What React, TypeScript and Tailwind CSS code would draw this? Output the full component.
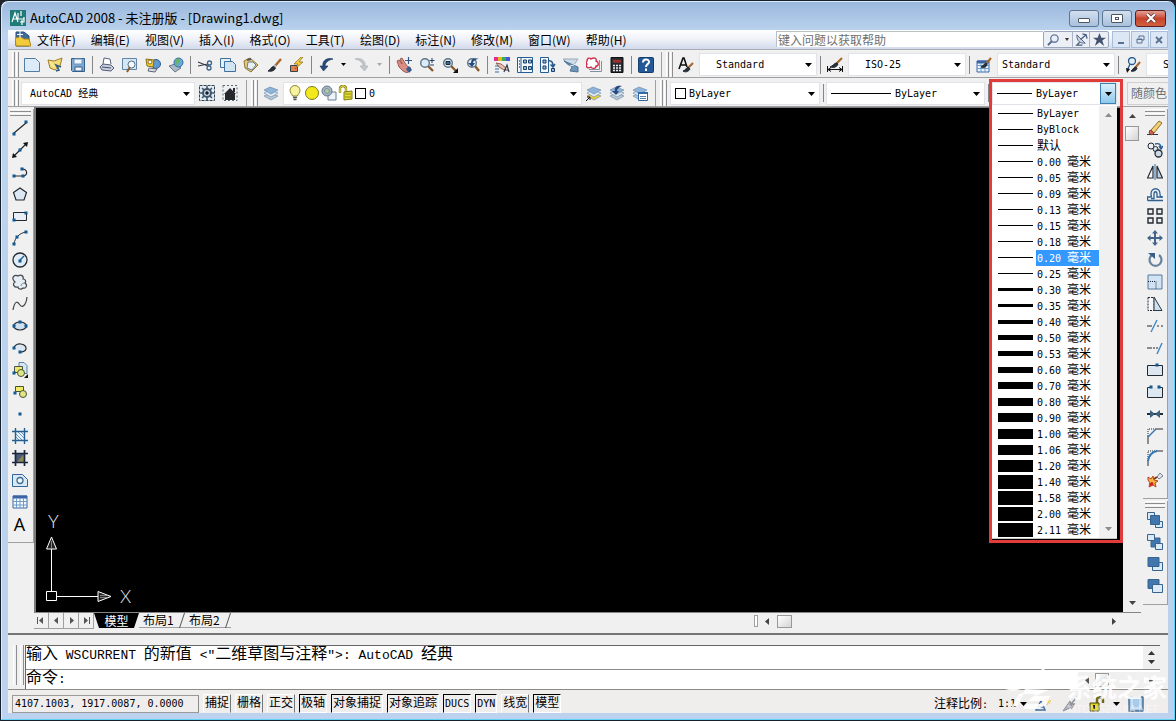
import { useState, type ReactNode } from 'react';
import clsx from 'clsx';

const mono = "font-[family-name:'DejaVu_Sans_Mono','Noto_Sans_CJK_SC',monospace] text-[10px]";

/* ---------- drawing helpers ---------- */

function Icon({ children, className }: { children: ReactNode; className?: string }) {
  return (
    <svg viewBox="0 0 16 16" className={clsx('size-4 shrink-0', className)} fill="none" stroke="#24292f" aria-hidden="true">
      {children}
    </svg>
  );
}

function Dot({ x, y }: { x: number; y: number }) {
  return <rect x={x - 1} y={y - 1} width="2" height="2" fill="#2b86c5" stroke="#0d4f86" />;
}

function Layers({ top = '#8fb4d9', bottom = '#b9c6d4' }: { top?: string; bottom?: string }) {
  return (
    <g stroke="#6484a5" strokeWidth=".6">
      <path d="M1 11l6-3 8 3-7 4z" fill={bottom} />
      <path d="M1 8l6-3 8 3-7 4z" fill="#dfe9f3" />
      <path d="M1 5l6-3 8 3-7 4z" fill={top} />
    </g>
  );
}

function Lens({ x = 6, y = 6 }: { x?: number; y?: number }) {
  return (
    <>
      <path d={`M${x + 3} ${y + 3}L14 14`} stroke="#8a5a2a" strokeWidth="2.4" />
      <circle cx={x} cy={y} r="4.3" fill="#dcecf9" stroke="#5f7487" strokeWidth="1.4" />
    </>
  );
}

function Brush() {
  return (
    <>
      <path d="M15 2L9 9" stroke="#a8672c" strokeWidth="2.4" />
      <path d="M9.500 8L7 10.500" stroke="#b8c2cc" strokeWidth="2.400" />
      <path d="M8 9.500c-3 0-3 3-6 4.500 4 1 7-1 7.500-3z" fill="#26303a" />
    </>
  );
}

/* ---------- icon sets ---------- */

const standardIcons: Record<string, ReactNode> = {
  新建: <path d="M.500 1.500h11l4 4v9H.500z" fill="#dcebf7" stroke="#4f7fa9" />,
  打开: (
    <>
      <path d="M1 3l6 1 8-3-2 8-5 4-5-2z" fill="#f4dc77" stroke="#9b7f2a" />
      <path d="M9 14l3-1-3-5 5 2" stroke="#2f5d85" strokeWidth="1.500" />
      <path d="M3 5l4 5" stroke="#fff6c2" />
    </>
  ),
  保存: (
    <>
      <path d="M1.500 1.500h13v13h-12l-1-1z" fill="#7fa9d0" stroke="#345f8c" />
      <path d="M4 2h8v5H4z" fill="#eef5fb" stroke="#6c93b8" />
      <path d="M5 10h7v4H5z" fill="#f4f7fa" stroke="#345f8c" />
    </>
  ),
  打印: (
    <>
      <path d="M4 7l1-6 6 1 1 5" fill="#fff" stroke="#5b6280" />
      <path d="M1 10l3-3 8 1 3 3-3 3-9-1z" fill="#c9cfdf" stroke="#555c78" />
      <path d="M3 10l9 1" stroke="#464d69" />
    </>
  ),
  打印预览: (
    <>
      <path d="M.500 1.500h14v11H.500z" fill="#d5e7f5" stroke="#5f86a8" />
      <circle cx="9.500" cy="7.500" r="3.500" fill="#f4faff" stroke="#5a6d7c" />
      <path d="M8 10l-3 5" stroke="#8a5a2a" strokeWidth="2" />
    </>
  ),
  发布: (
    <>
      <circle cx="11" cy="7" r="4.500" fill="#5e9ad0" stroke="#2c5e8f" />
      <path d="M1 2l8 1-1 7-6-1z" fill="#f3cf3e" stroke="#8c6d13" />
      <circle cx="5" cy="5" r="2" fill="#fff" stroke="#8c6d13" />
      <path d="M4 11l8 1-2 3-7-1z" fill="#d8dde5" stroke="#5d6775" />
    </>
  ),
  网上发布: (
    <>
      <path d="M1 9l6-2 6 4-6 4z" fill="#aab9c8" stroke="#6b7987" />
      <circle cx="10.500" cy="5.500" r="4.500" fill="#68a8dc" stroke="#376b99" />
      <path d="M8 2c3-1 5 1 4 3s-3 0-3 4c-2-2-3-5-1-7z" fill="#68b36b" stroke="none" />
    </>
  ),
  剪切: (
    <>
      <path d="M1 5l10 4M1 9l10-2" stroke="#343b44" strokeWidth="1.200" />
      <circle cx="12.500" cy="6" r="2" stroke="#3c638a" strokeWidth="1.300" />
      <circle cx="12" cy="11" r="2" stroke="#3c638a" strokeWidth="1.300" />
    </>
  ),
  复制: (
    <>
      <path d="M.500 1.500h10v9H.500z" fill="#e5f0f9" stroke="#3f719c" />
      <path d="M4.500 4.500h8l3 3v7h-11z" fill="#d1e4f3" stroke="#3f719c" />
    </>
  ),
  粘贴: (
    <>
      <path d="M1 4l6-3 8 7-7 7-6-4z" fill="#e5c979" stroke="#927434" />
      <path d="M5 5h5l3 3-4 5-5-2z" fill="#e8f0f7" stroke="#687e91" />
      <path d="M4 3l4-1" stroke="#555" strokeWidth="2" />
    </>
  ),
  特性匹配: <Brush />,
  块编辑器: (
    <>
      <path d="M1.500 8.500h7v6h-7z" fill="#e37e50" stroke="#3a4048" />
      <path d="M12 0L5 7h4l-3 5 8-7h-4l4-5z" fill="#f7d13b" stroke="#87651a" strokeWidth=".7" />
    </>
  ),
  放弃: <path d="M15 2C9 0 4 4 5 9H2l3.500 5L10 9H7c0-3 3-6 8-7z" fill="#27497b" stroke="#1d3a63" strokeWidth=".7" />,
  重做: <path d="M1 2c6-2 11 2 10 7h3l-3.500 5L6 9h3c0-3-3-6-8-7z" fill="#c3c6ca" stroke="#aeb2b7" strokeWidth=".7" />,
  实时平移: (
    <>
      <path d="M1 4l2-1 3 4-2-5 2-1 3 5 3 4 3 1-4 5-4-2-4-4z" fill="#d98d83" stroke="#8f4540" strokeWidth=".8" />
      <path d="M10 12l3-3 3 4-3 3z" fill="#325c92" stroke="none" />
      <path d="M12.500 0v7M9 3.500h7" stroke="#36557d" strokeWidth="1.200" />
    </>
  ),
  实时缩放: (
    <>
      <Lens />
      <path d="M13 1v5M10.500 3.500h5M11 8h4" stroke="#28415e" />
    </>
  ),
  窗口缩放: (
    <>
      <Lens />
      <path d="M4 4.500h4v3H4z" fill="#356f9f" />
      <path d="M16 11v5h-5z" fill="#111" stroke="none" />
    </>
  ),
  缩放上一个: (
    <>
      <Lens x={7} y={6} />
      <path d="M14 2C9 0 6 2 6 6H3l4 4 3-4H8c0-2 3-4 6-4z" fill="#27497b" stroke="none" />
    </>
  ),
  特性: (
    <>
      <path d="M0 2h4" stroke="#e12d8f" strokeWidth="4" />
      <path d="M4 2h4" stroke="#e8b81f" strokeWidth="4" />
      <path d="M8 2h4" stroke="#37ad58" strokeWidth="4" />
      <path d="M12 2h4" stroke="#4b55d6" strokeWidth="4" />
      <path d="M2 6l5 1 5 4-2 2-5-3z" fill="#eac1ae" stroke="#9c5b50" />
      <path d="M1 9h4M1 12h4M1 15h4" stroke="#3c6a97" />
      <path d="M10 15l3-7 2 7M11 13h4" stroke="#333b48" strokeWidth="1.200" />
    </>
  ),
  设计中心: (
    <>
      <path d="M.5.500h15v15H.500z" fill="#f2f8fd" stroke="#245c93" />
      <path d="M4 1v14" stroke="#245c93" />
      <path d="M2 4h1M2 7h1M2 10h1" stroke="#245c93" strokeWidth="1.500" />
      <path d="M6.500 3h3v3h-3zM11.500 3h3v3h-3zM6.500 9.500h3v3h-3zM11.500 9.500h3v3h-3z" fill="#90b9dc" stroke="#1c3f63" />
    </>
  ),
  工具选项板: (
    <>
      <path d="M.5.500h8v15h-8z" fill="#f2f8fd" stroke="#245c93" />
      <path d="M3 3h3v3H3zM3 9h3v3H3z" fill="#90b9dc" stroke="#1c3f63" />
      <path d="M8 4c4-1 5 2 5 5M10.500 7.500L13 10l2-3" stroke="#27588d" strokeWidth="1.500" />
      <path d="M11.500 11.500h3v3h-3z" fill="#90b9dc" stroke="#1c3f63" />
    </>
  ),
  图纸集管理器: (
    <>
      <path d="M0 2h15l-4 6H5z" fill="#cddbe7" stroke="#94a9bb" />
      <path d="M1 4l14 6v5l-8-1 2-4z" fill="#6f97b9" stroke="#4b7394" />
      <path d="M7 9l7-2" stroke="#e9f1f7" />
    </>
  ),
  标记集管理器: (
    <>
      <path d="M4 14.500h11.500V4M3 12.500h10.500V3" stroke="#8490a0" />
      <path d="M1 4c0-4 4-3 4-2 3-2 6-1 5 2 3 1 3 5 0 5 0 3-4 3-5 1-3 2-6 0-4-3-1-1-1-2 0-3z" fill="#fff" stroke="#d72f4b" strokeWidth="1.400" />
    </>
  ),
  快速计算器: (
    <>
      <path d="M2 .500h12v15H2z" fill="#252b31" stroke="#111" />
      <path d="M4 3h8v2.500H4z" fill="#a43030" stroke="#843030" strokeWidth=".5" />
      <path d="M4 8.500h2M7 8.500h2M10 8.500h2M4 11h2M7 11h2M10 11h2M4 13.500h2M7 13.500h2M10 13.500h2" stroke="#eee" strokeWidth="1.400" />
    </>
  ),
  帮助: (
    <>
      <rect x=".5" y=".5" width="15" height="15" rx="1" fill="#235996" stroke="#163e6c" />
      <path d="M5 5.500c0-4 6-4 6-.5 0 2.300-3 2-3 5M8 11.500V14" stroke="#fff" strokeWidth="2" />
    </>
  ),
};

const drawIcons: Record<string, ReactNode> = {
  直线: (<><path d="M2 13L14 3" strokeWidth="1.200" /><Dot x={2} y={14} /><Dot x={14} y={2} /></>),
  构造线: (<><path d="M2 14L14 2" strokeWidth="1.300" /><path d="M0 16l1-5 4 4zM16 0l-1 5-4-4z" fill="#111" stroke="none" /><Dot x={8} y={8} /></>),
  多段线: (<><path d="M2 12h9M10 5c6 0 6 7 1 7" strokeWidth="1.200" /><Dot x={2} y={12} /><Dot x={10} y={5} /><Dot x={11} y={12} /></>),
  正多边形: <path d="M8 2l6.500 4.500L12 14H4L1.500 6.500z" fill="#dce8f3" strokeWidth="1.200" />,
  矩形: (<><path d="M1.500 4.500h13v8h-13z" fill="#e8edf6" /><Dot x={2} y={12} /><Dot x={14} y={5} /></>),
  圆弧: (<><path d="M2 14C3 7 8 3 14 2" /><Dot x={2} y={14} /><Dot x={5} y={7} /><Dot x={14} y={2} /></>),
  圆: (<><circle cx="8" cy="8" r="7" fill="#e1ecf6" strokeWidth="1.300" /><path d="M8 8l4-4" stroke="#216399" strokeWidth="1.500" /><Dot x={8} y={9} /></>),
  修订云线: (
    <>
      <path d="M2 7C-1 3 3 0 6 2c3-2 6 0 5 3 3 0 3 3 2 4 3 2 1 6-2 5-2 2-5 1-5-1-4 1-6-3-3-5z" fill="#e5edf5" stroke="#41464c" strokeWidth="1.200" />
      <path d="M9 12c0-2 2-3 4-3" stroke="#7b858e" />
    </>
  ),
  样条曲线: <path d="M1 14C3 3 6 6 8 9s6 1 7-8" stroke="#444" strokeWidth="1.200" />,
  椭圆: (<><ellipse cx="8" cy="8" rx="6.500" ry="4" fill="#cfe1f1" strokeWidth="1.200" /><Dot x={2} y={8} /><Dot x={8} y={4} /><Dot x={14} y={8} /></>),
  椭圆弧: (<><path d="M2 8c1-6 13-5 12 1-1 3-4 3-6 3" fill="#dbe8f4" strokeWidth="1.200" /><Dot x={2} y={8} /><Dot x={8} y={12} /></>),
  插入块: (
    <>
      <path d="M7 .500h5l3 3v8H7z" fill="#d6e6f4" stroke="#5a84aa" />
      <path d="M2.500 4.500h8v6h-8z" fill="#ece96a" stroke="#4b5344" />
      <circle cx="9" cy="11" r="3.500" fill="#dfe682" stroke="#49543c" />
      <Dot x={2} y={11} />
      <path d="M16 12v4h-4z" fill="#111" stroke="none" />
    </>
  ),
  创建块: (<><path d="M3.500 2.500h8v5h-8z" fill="#f1ec68" stroke="#49532f" /><circle cx="11" cy="10" r="3.500" fill="#dfe682" stroke="#49543c" /><Dot x={3} y={9} /></>),
  点: <Dot x={8} y={8} />,
  图案填充: (
    <>
      <path d="M3 3h10v10H3z" fill="#edf5fb" stroke="none" />
      <path d="M3 8l5 5M3 5l8 8M5 3l8 8M8 3l5 5" stroke="#3d7fae" strokeWidth=".8" />
      <path d="M3.500 0v16M12.500 0v16M0 3.500h16M0 12.500h16" stroke="#245f94" strokeWidth="1.400" />
    </>
  ),
  渐变色: (
    <>
      <path d="M3 3h10v10H3z" fill="#4c5b76" stroke="none" />
      <path d="M12 4v8H5z" fill="#8b8b52" stroke="none" />
      <path d="M3.500 0v16M12.500 0v16M0 3.500h16M0 12.500h16" stroke="#1b2640" strokeWidth="1.700" />
    </>
  ),
  面域: (<><path d="M.5 2.500h10l5 5v7H.500z" fill="#d9e8f5" stroke="#32669a" /><circle cx="8" cy="8.500" r="3" fill="#eff6fb" stroke="#416c92" strokeWidth="1.300" /></>),
  表格: (
    <>
      <path d="M1 2h14v12H1z" fill="#f3f8fd" stroke="#3b68a8" />
      <path d="M1 3h14" stroke="#3a64a5" strokeWidth="3" />
      <path d="M1 7.500h14M1 11h14M4.500 4v10M8 4v10M11.500 4v10" stroke="#719bc8" />
    </>
  ),
};

const modifyIcons: Record<string, ReactNode> = {
  删除: (<><path d="M0 14.500h11" stroke="#333" /><path d="M4 10l8-9 3 2-8 10z" fill="#f0cf74" stroke="#8f6e31" /><path d="M3 10l4 3-2 2-3-2z" fill="#d7655a" stroke="#823e35" /></>),
  复制对象: (<><circle cx="4" cy="4" r="3" fill="#eaf1f7" /><circle cx="8.500" cy="7" r="2.500" fill="#d7e6f2" /><circle cx="11.500" cy="11.500" r="3.500" fill="#ccdae5" strokeWidth="1.300" /><path d="M8 2c4-1 6 0 6 4M12 4l2 3 2-3" stroke="#285f94" strokeWidth="1.400" /></>),
  镜像: (<><path d="M6 2v12H.500z" fill="#f6f8fa" strokeWidth="1.200" /><path d="M10 2v12h5.500z" fill="#bfd2e4" strokeWidth="1.200" /><path d="M8 0v16" stroke="#2a70ad" /></>),
  偏移: (
    <>
      <path d="M.500 14.500V11H4c1-1 0-1 0-3 0-7 9-7 9 0 0 2 0 2 1 3h2" fill="#eaf2f8" stroke="#2e5f8d" strokeWidth="1.300" />
      <path d="M.500 14.500H16M4 12.500h3V8c0-3 3-3 3 0v3h5" stroke="#2e5f8d" strokeWidth="1.300" />
    </>
  ),
  阵列: <path d="M1 1h5v5H1zM10 1h5v5h-5zM1 10h5v5H1zM10 10h5v5h-5z" fill="#e7edf3" strokeWidth="1.400" />,
  移动: <path d="M8 0l3 3.500H9V7h3.500V5L16 8l-3.500 3V9H9v3.500h2L8 16l-3-3.500h2V9H3.500v2L0 8l3.500-3v2H7V3.500H5z" fill="#41658b" stroke="none" />,
  旋转: (<><path d="M5 3a6 6 0 1 0 7 0" stroke="#66839e" strokeWidth="2.200" /><path d="M1 1h7v6z" fill="#365f87" stroke="none" /></>),
  缩放: (<><path d="M1 1h14v14H1z" fill="#d1e3f2" stroke="#54799c" /><path d="M1 7.500h8V15" stroke="#16283b" strokeDasharray="1 1" /></>),
  拉伸: (<><path d="M1 1.500h6v13H1z" fill="#f5f7fa" strokeDasharray="2 1" /><path d="M7 1l8 13.500H7z" fill="#cfdfee" stroke="#2c3947" /></>),
  修剪: (<><path d="M0 8h5M10 8h2M14 8h2" /><path d="M4 14l6-12" stroke="#3f85c1" strokeWidth="1.400" /></>),
  延伸: (<><path d="M0 8h5M6 8h2M9 8h2" /><path d="M10 14l5-11" stroke="#3f85c1" strokeWidth="1.400" /></>),
  打断于点: (<><path d="M.500 3.500h15v10H.500z" fill="#dce7f1" /><Dot x={10} y={3} /></>),
  打断: (<><path d="M5 3.500H.500v10h15v-10H11" fill="#dce7f1" /><Dot x={4} y={3} /><Dot x={12} y={3} /></>),
  合并: (<><path d="M0 8h16" strokeWidth="2" /><path d="M3 4l5 4-5 4zM13 4L8 8l5 4z" fill="#3b5f80" stroke="none" /></>),
  倒角: (<><path d="M1 16V8M9 1h7" /><path d="M1 8V1h8" strokeDasharray="1 1" /><path d="M1 9l8-8" stroke="#3679b5" strokeWidth="1.500" /></>),
  圆角: (<><path d="M1 16v-5M10 1h6" /><path d="M1 11V1h9" strokeDasharray="1 1" /><path d="M1 11C2 5 5 2 10 1" stroke="#3278b8" strokeWidth="2" /></>),
  分解: (
    <>
      <path d="M1 5l3 2 2-3 1 4 4 1-3 2 1 4-3-2-4 2 1-4-2-3z" fill="#f2b83c" stroke="#bc3e2b" />
      <path d="M10 5l3-4 3 3-4 3z" fill="#dfe5ea" stroke="#75818b" />
      <path d="M3 13l3-2" stroke="#d42020" strokeWidth="3" />
      <path d="M7 7l3-2" stroke="#7a3b1c" strokeWidth="2" />
    </>
  ),
};

const back = '#dceaf6';
const front = '#4177ad';
const orderIcons: Record<string, ReactNode> = {
  前置: (<g stroke="#36648f"><path d="M.500.500h7v7h-7zM8.500 9.500h7v6h-7z" fill={back} /><path d="M3.500 3.500h9v9h-9z" fill={front} /></g>),
  后置: (<g stroke="#36648f"><path d="M4 4h9v9H4z" fill={front} /><path d="M.500.500h7v6h-7zM8.500 9.500h7v6h-7z" fill={back} /></g>),
  置于对象之上: (<g stroke="#36648f"><path d="M5.500 6.500h10v8h-10z" fill={back} /><path d="M1 1.500h11v9H1z" fill={front} /></g>),
  置于对象之下: (<g stroke="#36648f"><path d="M1 1.500h11v9H1z" fill={front} /><path d="M5.500 6.500h10v8h-10z" fill={back} /></g>),
};

/* ---------- small building blocks ---------- */

function ToolButton({ label, children }: { label: string; children: ReactNode }) {
  return (
    <button type="button" aria-label={label} className="flex h-[22px] w-[23px] shrink-0 items-center justify-center">
      <Icon>{children}</Icon>
    </button>
  );
}

function IconGroup({ names }: { names: string[] }) {
  return (
    <>
      {names.map((name) => (
        <ToolButton key={name} label={name}>{standardIcons[name]}</ToolButton>
      ))}
    </>
  );
}

function Grip() {
  return (
    <span className="ml-1 flex w-2 shrink-0 gap-px self-stretch">
      <span className="w-[3px] border-r border-l border-r-[#8d8d8d] border-l-white" />
      <span className="w-[3px] border-r border-l border-r-[#8d8d8d] border-l-white" />
    </span>
  );
}

function SideGrip() {
  return (
    <div className="mx-0.5 mt-0.5 mb-px flex h-[7px] flex-col gap-px">
      <span className="h-[3px] border-t border-b border-t-white border-b-[#8d8d8d]" />
      <span className="h-[3px] border-t border-b border-t-white border-b-[#8d8d8d]" />
    </div>
  );
}

function Separator() {
  return (
    <span className="flex w-1.5 shrink-0 justify-center">
      <span className="h-[18px] w-px bg-[#858585]" />
    </span>
  );
}

function Arrow({ dir = 'down', className = 'text-black' }: { dir?: 'up' | 'down' | 'left' | 'right'; className?: string }) {
  const paths = { down: 'M0 2h7L3.500 6z', up: 'M0 5h7L3.500 1z', left: 'M5 0v7L1 3.500z', right: 'M2 0v7l4-3.500z' };
  return (
    <svg viewBox="0 0 7 7" className={clsx('size-[7px] shrink-0', className)} fill="currentColor" aria-hidden="true">
      <path d={paths[dir]} />
    </svg>
  );
}

interface ComboProps {
  label: string;
  value: string;
  width: string;
  pad?: string;
  lead?: ReactNode;
  open?: boolean;
}

function Combo({ label, value, width, pad = 'pl-1', lead, open = false }: ComboProps) {
  return (
    <div className={clsx('relative flex h-[23px] shrink-0 items-center border border-[#e0e3e8] bg-white', width)}>
      {lead}
      <select aria-label={label} className={clsx('h-full min-w-0 flex-1 appearance-none text-black outline-none', pad, mono)}>
        <option>{value}</option>
      </select>
      <span
        className={clsx(
          'pointer-events-none absolute top-0 right-0 flex h-full w-4 items-center justify-center',
          open && 'border border-[#3c7fb1] bg-gradient-to-b from-[#d9f0fc] to-[#8fc8ea]'
        )}
      >
        <Arrow />
      </span>
    </div>
  );
}

// Latin runs are set narrower than the Chinese ones, like a bitmap system font
function Mixed({ text }: { text: string }) {
  return (
    <>
      {text.split(/([\u4e00-\u9fff]+)/).map((part, i) => (
        <span key={i} className={i % 2 ? 'text-xs' : 'text-[10px]'}>{part}</span>
      ))}
    </>
  );
}

/* ---------- window chrome ---------- */

function TitleBar() {
  const caption = 'flex h-[17px] items-center justify-center rounded-[3px] border border-[#5e7590] bg-gradient-to-b from-[#d2e0ef] to-[#a9c1dc]';
  return (
    <header className="flex h-[29px] items-center pt-[5px]">
      <Icon className="ml-0.5">
        <path d="M0 0h16v16H0z" fill="#1e7b78" stroke="none" />
        <path d="M2 12L5 3l3 9M3 9h5M8 3v6h6M11 1v5M10 12h4V7M12 10v5" stroke="#fff" strokeWidth="1.200" />
      </Icon>
      <h1 className="ml-1 flex-1 text-[13px] leading-5 text-black">
        AutoCAD 2008 - 未注册版 - [Drawing1.dwg]
      </h1>
      <div className="flex gap-[3px] pr-0.5">
        <button type="button" aria-label="最小化" className={clsx(caption, 'w-[30px]')}>
          <span className="mt-1 h-[5px] w-3 rounded-[1px] border border-[#4c5663] bg-white" />
        </button>
        <button type="button" aria-label="还原" className={clsx(caption, 'w-[30px]')}>
          <span className="flex h-[9px] w-3 items-center justify-center rounded-[1px] border border-[#4c5663] bg-white">
            <span className="h-[3px] w-1 border border-[#4c5663]" />
          </span>
        </button>
        <button
          type="button"
          aria-label="关闭"
          className="flex h-[17px] w-[31px] items-center justify-center rounded-[3px] border border-[#5f1d1a] bg-gradient-to-b from-[#e0a097] via-[#c8432c] to-[#d0603f]"
        >
          <svg viewBox="0 0 12 10" className="h-2.5 w-3" fill="none">
            <path d="M2 1l8 8M10 1L2 9" stroke="#5a3333" strokeWidth="3.600" />
            <path d="M2 1l8 8M10 1L2 9" stroke="#fff" strokeWidth="2.200" />
          </svg>
        </button>
      </div>
    </header>
  );
}

const menus = ['文件(F)', '编辑(E)', '视图(V)', '插入(I)', '格式(O)', '工具(T)', '绘图(D)', '标注(N)', '修改(M)', '窗口(W)', '帮助(H)'];

function MenuBar() {
  const child = 'flex h-[17px] w-[18px] items-center justify-center border border-[#a9bdd6] bg-[#dce7f5]';
  return (
    <nav className="flex h-5 items-start border-b border-[#a9adb5] bg-gradient-to-b from-white via-[#eef1f8] to-[#d3daec]">
      <Icon className="mt-px ml-[7px]">
        <path d="M1 1h8l5 4v10H1z" fill="#3d6a9a" stroke="#29517c" />
        <path d="M0 7l6-1 3 2h5l2 7H1z" fill="#f2cb3d" stroke="#a98218" />
        <path d="M5 0v7M2 3.500h6" stroke="#fff" />
      </Icon>
      <ul className="ml-1.5 flex gap-[15px]">
        {menus.map((menu) => (
          <li key={menu} className="flex">
            <button type="button" className="h-[19px] whitespace-nowrap text-xs leading-[19px]">{menu}</button>
          </li>
        ))}
      </ul>
      <div className="ml-auto flex pt-px">
        <input
          type="text"
          aria-label="帮助搜索"
          placeholder="键入问题以获取帮助"
          className="h-4 w-[267px] border-t border-l border-[#b9c0ca] bg-white px-px text-xs text-black placeholder:text-[#707070]"
        />
        <div className="mr-[3px] flex h-[17px] items-center rounded-[2px] border border-[#9aa7ba] bg-[#eceff6]">
          <button type="button" aria-label="搜索" className="flex w-7 items-center justify-center gap-[5px]">
            <svg viewBox="0 0 14 14" className="size-[13px]" fill="none">
              <circle cx="8" cy="6" r="4" fill="#e9f0fa" stroke="#6a7c9c" strokeWidth="1.500" />
              <path d="M5 9l-4 4" stroke="#4d6087" strokeWidth="2" />
            </svg>
            <svg viewBox="0 0 4 3" className="h-[3px] w-1"><path d="M0 0h4L2 3z" fill="#333" /></svg>
          </button>
          <button type="button" aria-label="通讯中心" className="flex h-full w-[18px] items-center justify-center border-x border-[#a9b4c6]">
            <svg viewBox="0 0 14 14" className="size-[13px]" fill="none" stroke="#4a5f80">
              <path d="M2 2c0 7 3 9 9 9z" fill="#c9d5e6" />
              <path d="M6 7l6-5M8 1l4 1 1 4M5 10l-3 3h6" strokeWidth="1.400" />
            </svg>
          </button>
          <button type="button" aria-label="收藏夹" className="flex w-[18px] items-center justify-center">
            <svg viewBox="0 0 14 14" className="size-[13px]"><path d="M7 0l2 5h5l-4 3 2 6-5-4-5 4 2-6-4-3h5z" fill="#43536f" /></svg>
          </button>
        </div>
        <div className="flex gap-px">
          <button type="button" aria-label="最小化图形" className={child}><span className="mt-1.5 h-0.5 w-1.5 bg-[#5a7090]" /></button>
          <button type="button" aria-label="还原图形" className={child}>
            <svg viewBox="0 0 9 9" className="size-[9px]" fill="none" stroke="#5a7090"><path d="M3 3V1h5v4H6M1 4h5v4H1zM1 4.500h5" /></svg>
          </button>
          <button type="button" aria-label="关闭图形" className={child}>
            <svg viewBox="0 0 8 8" className="size-2" fill="none"><path d="M1 1l6 6M7 1L1 7" stroke="#5a7090" strokeWidth="1.800" /></svg>
          </button>
        </div>
      </div>
    </nav>
  );
}

const panel = 'flex shrink-0 items-center border-r border-[#a0a0a0]';

function StandardToolbar() {
  return (
    <div className="flex h-7 overflow-hidden border-b border-[#a0a0a0] pt-0.5">
      <div className={clsx(panel, 'pr-1')}>
        <Grip />
        <IconGroup names={['新建', '打开', '保存']} />
        <Separator />
        <IconGroup names={['打印', '打印预览', '发布', '网上发布']} />
        <Separator />
        <IconGroup names={['剪切', '复制', '粘贴', '特性匹配', '块编辑器']} />
        <Separator />
        <IconGroup names={['放弃']} />
        <button type="button" aria-label="放弃列表" className="flex w-[13px] justify-center"><svg viewBox="0 0 5 3" className="h-[3px] w-[5px]"><path d="M0 0h5L2.500 3z" /></svg></button>
        <IconGroup names={['重做']} />
        <button type="button" aria-label="重做列表" className="flex w-[13px] justify-center"><svg viewBox="0 0 5 3" className="h-[3px] w-[5px]" fill="#aaa"><path d="M0 0h5L2.500 3z" /></svg></button>
        <Separator />
        <IconGroup names={['实时平移', '实时缩放', '窗口缩放', '缩放上一个']} />
        <Separator />
        <IconGroup names={['特性', '设计中心', '工具选项板', '图纸集管理器', '标记集管理器', '快速计算器']} />
        <Separator />
        <IconGroup names={['帮助']} />
      </div>
      <div className="flex min-w-0 flex-1 items-center overflow-hidden">
        <Grip />
        <ToolButton label="文字样式"><path d="M1 12L5 1h1l3 9M2 8h6" stroke="#111" strokeWidth="1.600" /><path d="M15 6l-5 5" stroke="#a8672c" strokeWidth="2.200" /><path d="M10 10c-2 1-2 3-5 4 3 2 6 0 7-2z" fill="#26303a" /></ToolButton>
        <Combo label="文字样式控制" value="Standard" width="ml-0.5 w-[118px]" pad="pl-4" />
        <Separator />
        <ToolButton label="标注样式"><path d="M15 1L9 7" stroke="#a8672c" strokeWidth="2.200" /><path d="M10 6C7 6 6 9 3 10c4 1 7 0 8-3z" fill="#26303a" /><path d="M.500 9v6M15.500 9v6M1 12.500h14M4 10.500l-3 2 3 2M12 10.500l3 2-3 2" stroke="#111" /></ToolButton>
        <Combo label="标注样式控制" value="ISO-25" width="ml-0.5 w-[118px]" pad="pl-4" />
        <Separator />
        <ToolButton label="表格样式"><path d="M1 4h12v11H1z" fill="#eaf3fc" stroke="#3b68a8" /><path d="M1 5h12" stroke="#3a64a5" strokeWidth="3" /><path d="M1 8.500h12M1 11.500h12M5 6v9M9 6v9" stroke="#719bc8" /><path d="M15 1l-5 6" stroke="#a8672c" strokeWidth="2" /><path d="M10 6C8 7 7 9 5 10c3 1 6 0 6-3z" fill="#26303a" /></ToolButton>
        <Combo label="表格样式控制" value="Standard" width="ml-0.5 w-[118px]" />
        <Separator />
        <ToolButton label="多重引线样式"><circle cx="7" cy="4" r="3.500" fill="#e3eef8" stroke="#27588d" strokeWidth="1.300" /><path d="M5 7l-3 7" stroke="#27588d" strokeWidth="1.300" /><path d="M1 11l1 5 3-4z" fill="#111" stroke="none" /><path d="M15 5l-5 6" stroke="#a8672c" strokeWidth="2" /><path d="M10 10c-2 1-2 3-4 4 3 1 6-1 6-3z" fill="#26303a" /></ToolButton>
        <Combo label="多重引线样式控制" value="Standard" width="ml-0.5 w-[118px]" pad="pl-4" />
      </div>
    </div>
  );
}

/* ---------- lineweight list ---------- */

const lineweights = [
  { name: 'ByLayer', px: 1 },
  { name: 'ByBlock', px: 1 },
  { name: '默认', px: 1 },
  { name: '0.00 毫米', px: 1 },
  { name: '0.05 毫米', px: 1 },
  { name: '0.09 毫米', px: 1 },
  { name: '0.13 毫米', px: 1 },
  { name: '0.15 毫米', px: 1 },
  { name: '0.18 毫米', px: 1 },
  { name: '0.20 毫米', px: 1 },
  { name: '0.25 毫米', px: 1 },
  { name: '0.30 毫米', px: 3 },
  { name: '0.35 毫米', px: 3 },
  { name: '0.40 毫米', px: 4 },
  { name: '0.50 毫米', px: 5 },
  { name: '0.53 毫米', px: 5 },
  { name: '0.60 毫米', px: 6 },
  { name: '0.70 毫米', px: 7 },
  { name: '0.80 毫米', px: 8 },
  { name: '0.90 毫米', px: 9 },
  { name: '1.00 毫米', px: 10 },
  { name: '1.06 毫米', px: 10 },
  { name: '1.20 毫米', px: 12 },
  { name: '1.40 毫米', px: 14 },
  { name: '1.58 毫米', px: 14 },
  { name: '2.00 毫米', px: 14 },
  { name: '2.11 毫米', px: 14 },
];

function LineweightControl() {
  const [active, setActive] = useState('0.20 毫米');

  return (
    <div className="relative z-20 ml-px shrink-0">
      <Combo
        label="线宽控制"
        value="ByLayer"
        width="w-[125px]"
        open
        lead={<span className="ml-1 h-px w-[35px] bg-black" />}
      />
      <div className="absolute top-full left-0 flex w-full border-b border-[#c8c8c8] bg-white pt-px">
        <ul role="listbox" aria-label="线宽" className="min-w-0 flex-1">
          {lineweights.map(({ name, px }) => (
            <li
              key={name}
              role="option"
              aria-selected={name === active}
              onMouseEnter={() => setActive(name)}
              className={clsx('flex h-4 items-center pl-1.5 leading-4', mono)}
            >
              <span className="w-[35px] shrink-0 bg-black" style={{ height: px }} />
              <span className={clsx('ml-[3px] h-4 flex-1 whitespace-nowrap pl-px', name === active && 'bg-[#3399ff] text-white')}>
                <Mixed text={name} />
              </span>
            </li>
          ))}
        </ul>
        <div className="flex w-[18px] flex-col items-center justify-between bg-[#f0f0f0] py-1.5">
          <Arrow dir="up" className="text-[#8c8c8c]" />
          <Arrow className="text-[#8c8c8c]" />
        </div>
      </div>
      <div className="pointer-events-none absolute -top-[3px] -left-[3px] h-[464px] w-[134px] border-[3px] border-[#e23b3b]" />
    </div>
  );
}

function LayerToolbar() {
  return (
    <div className="flex h-[29px] border-b border-[#a0a0a0] pt-0.5">
      <div className={clsx(panel, 'pr-[5px]')}>
        <Grip />
        <Combo label="工作空间" value="AutoCAD 经典" width="ml-px w-[174px]" pad="pl-2" />
        <ToolButton label="工作空间设置">
          <path d="M.500.500h15v15H.500z" fill="#e4ecf3" stroke="#2f4256" strokeDasharray="3 1" />
          <circle cx="8" cy="8" r="4" fill="#c7d7e5" stroke="#41566b" strokeWidth="2" />
          <path d="M8 1v3M8 12v3M1 8h3M12 8h3M3 3l2 2M11 11l2 2M13 3l-2 2M5 11l-2 2" stroke="#41566b" strokeWidth="1.600" />
          <circle cx="8" cy="8" r="1.300" fill="#111" />
        </ToolButton>
        <ToolButton label="我的工作空间">
          <path d="M1 .500h14v15H1z" stroke="#596a7b" strokeDasharray="2 2" />
          <path d="M8 3l6 6h-1v6H3V9H2z" fill="#25292e" stroke="none" />
          <path d="M11 3h2v4h-2z" fill="#25292e" stroke="none" />
        </ToolButton>
      </div>
      <div className={clsx(panel, 'pr-1')}>
        <Grip />
        <ToolButton label="图层特性管理器"><Layers /></ToolButton>
        <Combo
          label="图层控制"
          value="0"
          width="ml-px w-[299px]"
          pad="pl-[3px]"
          lead={
            <span className="flex items-center gap-px pl-[3px]">
              <Icon><path d="M5.500 11C5 9 3 8 3 5.500a5 5 0 0 1 10 0C13 8 11 9 10.500 11z" fill="#f7f3a0" stroke="#8e8430" /><path d="M6 12.500h4M6.500 14.500h3" stroke="#555" strokeWidth="1.500" /></Icon>
              <Icon><circle cx="8" cy="8" r="6.500" fill="#f3e81c" stroke="#7d7a24" /></Icon>
              <Icon><path d="M7 7h8v8H7z" fill="#eef3f7" stroke="#6b7f91" /><circle cx="6" cy="6" r="5" fill="#a6b9c9" stroke="#60778d" /><circle cx="6" cy="6" r="2.500" fill="#b8c99a" stroke="#7b92a6" /></Icon>
              <Icon><path d="M2 8V4c0-4 6-4 6 0v4" stroke="#8a8420" strokeWidth="2.400" /><path d="M2 8V4c0-4 6-4 6 0v4" stroke="#f1e958" /><path d="M6 7l8-1v8l-8 1z" fill="#e4dc2c" stroke="#7e7a1d" /><path d="M7 9h6M7 12h6" stroke="#948d21" /></Icon>
              <span className="size-[11px] border border-black bg-white" />
            </span>
          }
        />
        <ToolButton label="将对象的图层置为当前"><Layers bottom="#e8cf3b" /><path d="M0 16l4-4M1 12h3v3" stroke="#111" /></ToolButton>
        <ToolButton label="上一个图层"><Layers /><path d="M13 1C8 0 5 2 6 6H3l4 4 3-4H8c0-2 2-4 5-5z" fill="#27497b" stroke="none" /></ToolButton>
        <ToolButton label="图层状态管理器"><Layers /><path d="M6.500 7.500h9v8h-9z" fill="#fff" stroke="#2f68a5" /><path d="M6 8h10" stroke="#2f68a5" strokeWidth="2" /><path d="M8 11.500h6M8 13.500h6" stroke="#4f7fae" /></ToolButton>
      </div>
      <div className="flex min-w-0 flex-1 items-center">
        <Grip />
        <Combo
          label="颜色控制"
          value="ByLayer"
          width="ml-0.5 w-[150px]"
          lead={<span className="ml-1 size-[11px] border border-black bg-white" />}
          pad="pl-[3px]"
        />
        <Separator />
        <Combo
          label="线型控制"
          value="ByLayer"
          width="w-[159px]"
          lead={<span className="ml-1 h-px w-[60px] bg-black" />}
        />
        <Separator />
        <LineweightControl />
        <Separator />
        <select
          disabled
          aria-label="打印样式控制"
          className="ml-1 h-[23px] min-w-0 flex-1 appearance-none border border-r-0 border-[#cfcfcf] bg-[#f0f0f0] pl-[3px] text-xs text-[#707070]"
        >
          <option>随颜色</option>
        </select>
      </div>
    </div>
  );
}

/* ---------- workspace ---------- */

function SideTools({ icons, children }: { icons: Record<string, ReactNode>; children?: ReactNode }) {
  return (
    <div className="border-r border-b border-[#a0a0a0] pb-[7px]">
      <SideGrip />
      {Object.entries(icons).map(([name, drawing]) => (
        <ToolButton key={name} label={name}>{drawing}</ToolButton>
      ))}
      {children}
    </div>
  );
}

const thumb = 'border border-[#989898] bg-gradient-to-br from-white to-[#d4d4d4]';

function LayoutTabs() {
  const nav = 'flex h-full w-[15px] items-center justify-center border-r border-[#a0a0a0]';
  return (
    <div className="flex h-[17px] items-stretch border-t border-[#858585]">
      <div className="flex border-b border-[#a0a0a0]">
        <button type="button" aria-label="第一个" className={nav}><span className="h-[7px] w-px bg-[#555]" /><Arrow dir="left" className="text-[#555]" /></button>
        <button type="button" aria-label="上一个" className={nav}><Arrow dir="left" className="text-[#555]" /></button>
        <button type="button" aria-label="下一个" className={nav}><Arrow dir="right" className="text-[#555]" /></button>
        <button type="button" aria-label="最后一个" className={nav}><Arrow dir="right" className="text-[#555]" /><span className="h-[7px] w-px bg-[#555]" /></button>
      </div>
      <div role="tablist" className="flex text-xs leading-4">
        <button type="button" role="tab" aria-selected="true" className="h-[15px] w-[45px] bg-black leading-[15px] text-white [clip-path:polygon(0_0,100%_0,40px_100%,5px_100%)]">模型</button>
        {['布局1', '布局2'].map((tab) => (
          <button key={tab} type="button" role="tab" aria-selected="false" className="flex h-[15px] w-[46px] items-center justify-between border-b border-[#a0a0a0] pl-1">
            {tab}
            <svg viewBox="0 0 6 15" className="h-[15px] w-1.5" fill="none" stroke="#555"><path d="M5.500 0L.500 15" /></svg>
          </button>
        ))}
      </div>
      <div className="ml-auto flex w-[387px] items-center bg-[#f0f0f0]">
        <span className="h-3 w-1 border border-[#a0a0a0] bg-white" />
        <Arrow dir="left" className="ml-1.5 text-[#444]" />
        <span className={clsx('ml-1.5 h-[13px] w-[15px]', thumb)} />
        <Arrow dir="right" className="mr-6 ml-auto text-[#444]" />
      </div>
    </div>
  );
}

function Workspace() {
  return (
    <main className="flex flex-1 pb-1">
      <div className="w-[26px] shrink-0">
        <SideTools icons={drawIcons}>
          <button type="button" aria-label="多行文字" className="flex h-[22px] w-[23px] items-center justify-center font-[family-name:'Open_Sans',sans-serif] text-lg leading-none">
            A
          </button>
        </SideTools>
      </div>
      <div className="flex min-w-0 flex-1 flex-col">
        <div className="flex flex-1">
          <div className="flex flex-1 items-end border-t border-l-2 border-[#7b7b7b] bg-black">
            <svg viewBox="0 0 104 104" className="size-[104px]" fill="none" stroke="#fff" role="img" aria-label="UCS 图标">
              <path d="M10.500 83.500h10v9h-10zM15.500 83V41M21 88.500h41" />
              <path d="M15.500 29l-5 12h10zM75 88.500l-13-5v10z" fill="#222" />
              <path d="M15.500 33v7M64 87.500h8M64 89.500h8" stroke="#aaa" strokeWidth=".7" />
              <g fill="#e8e8e8" stroke="none" className="font-[family-name:Lato,sans-serif] text-lg font-light">
                <text x="12" y="20">Y</text>
                <text x="84" y="95">X</text>
              </g>
            </svg>
          </div>
          <div className="flex w-[18px] flex-col items-center bg-[#f0f0f0] pt-1.5 pb-1.5">
            <Arrow dir="up" className="text-[#444]" />
            <span className={clsx('mt-1.5 h-[15px] w-3.5', thumb)} />
            <Arrow className="mt-auto text-[#444]" />
          </div>
        </div>
        <LayoutTabs />
      </div>
      <div className="ml-0.5 w-[25px] shrink-0">
        <SideTools icons={modifyIcons} />
        <SideTools icons={orderIcons} />
      </div>
    </main>
  );
}

/* ---------- command line and status bar ---------- */

function CommandLine() {
  const text = "font-[family-name:'Liberation_Mono','Noto_Sans_CJK_SC',monospace] text-[13px]";
  const cjk = 'text-base leading-none';
  return (
    <section className="flex h-14 shrink-0 border-t-2 border-[#757575] pt-2.5">
      <span className="ml-1 flex h-10 w-[13px] shrink-0 justify-center gap-[3px]">
        <span className="w-1 border-r border-l border-r-[#8d8d8d] border-l-white" />
        <span className="w-1 border-r border-l border-r-[#8d8d8d] border-l-white" />
      </span>
      <div className="mr-2 min-w-0 flex-1 border-t border-l border-[#666]">
        <div className="flex h-6 border-b border-[#8a8a8a] bg-white">
          <p className={clsx('flex-1 overflow-hidden whitespace-pre leading-5', text)}>
            <span className={cjk}>输入</span> WSCURRENT <span className={cjk}>的新值</span> &lt;"<span className={cjk}>二维草图与注释</span>"&gt;: AutoCAD <span className={cjk}>经典</span>
          </p>
          <div className="flex w-[17px] flex-col items-center justify-between bg-[#f0f0f0] py-1">
            <Arrow dir="up" className="text-[#333]" />
            <Arrow className="text-[#333]" />
          </div>
        </div>
        <div className="flex h-5 items-center bg-white">
          <label htmlFor="command" className={clsx('whitespace-nowrap', text)}>
            <span className={cjk}>命令</span>:
          </label>
          <input id="command" type="text" className={clsx('min-w-0 flex-1 outline-none', text)} />
          <div className="flex h-4 w-[82px] items-center bg-[#f0f0f0] px-1.5">
            <Arrow dir="left" className="text-[#555]" />
            <span className={clsx('ml-1 h-3.5 w-3.5', thumb)} />
            <Arrow dir="right" className="ml-auto text-[#555]" />
          </div>
        </div>
      </div>
    </section>
  );
}

const toggles = [
  { name: '捕捉', on: false },
  { name: '栅格', on: false },
  { name: '正交', on: false },
  { name: '极轴', on: true },
  { name: '对象捕捉', on: true },
  { name: '对象追踪', on: true },
  { name: 'DUCS', on: true },
  { name: 'DYN', on: true },
  { name: '线宽', on: false },
  { name: '模型', on: true },
];

function StatusBar() {
  return (
    <footer className={clsx('flex h-6 shrink-0 items-center border-t border-[#8a8a8a] bg-[#f0eded] pt-1 pr-2', mono)}>
      <output className="ml-1 h-[18px] w-[187px] border border-[#9a9a9a] border-r-[#8a8a8a] pl-0.5 leading-4 whitespace-nowrap">
        4107.1003, 1917.0087, 0.0000
      </output>
      <div className="ml-1 flex gap-1">
        {toggles.map(({ name, on }) => (
          <button
            key={name}
            type="button"
            aria-pressed={on}
            className={clsx(
              'h-[19px] border px-px leading-[17px] whitespace-nowrap',
              on ? 'border-t-black border-r-white border-b-white border-l-black' : 'border-t-white border-r-[#777] border-b-[#f0eded] border-l-white'
            )}
          >
            <Mixed text={name} />
          </button>
        ))}
      </div>
      <label htmlFor="scale" className="ml-auto whitespace-nowrap"><Mixed text="注释比例:" /></label>
      <select id="scale" className="ml-2.5 w-[22px] appearance-none outline-none">
        <option>1:1</option>
      </select>
      <Arrow />
      <div className="ml-2 flex items-center gap-[11px]">
        <Icon><path d="M1 14L6 5l4 9zM3 11h6" stroke="#3f6f9f" strokeWidth="1.500" /><path d="M12 1v8M8 5h8M9 2l6 6M15 2L9 8" stroke="#e2bd29" /></Icon>
        <Icon><path d="M1 15L8 5l2 6z" fill="#b6bac0" stroke="#8b9097" /><path d="M15 1L9 8h3l-3 5" stroke="#8b9097" strokeWidth="1.500" /></Icon>
        <Icon><path d="M8 8V4c0-4 6-4 6 0v3" stroke="#6e681c" strokeWidth="2.400" /><path d="M1 7h9v8H1z" fill="#d9ce22" stroke="#4f4b14" /><path d="M5 9v4" stroke="#222" strokeWidth="2" /></Icon>
      </div>
      <Arrow className="mx-2" />
      <Icon><path d="M1 1h14v14H1z" fill="#a9cbea" stroke="#3e688f" strokeWidth="1.400" /><path d="M4 1v11h8V1" stroke="#e8f3fc" /></Icon>
      <span className="w-4" />
    </footer>
  );
}

function Watermark() {
  return (
    <div className="pointer-events-none absolute right-0 bottom-1 flex items-end text-white">
      <svg viewBox="0 0 66 44" className="mb-1 h-11 w-[66px]" fill="#fff" fillOpacity=".9" aria-hidden="true">
        <path d="M0 20l26-5L42 0l18 18h-8L41 8 29 19 12 23z" />
        <path d="M24 21l24 1-14 6h16l-5 9-8 4H22l4-5h13l3-3H27l8-7H22z" />
        <path d="M18 26l5-1-6 12-7 3z" />
      </svg>
      <div className="w-[108px]">
        <div className="text-[25px] leading-9 font-bold whitespace-nowrap opacity-90">系统之家</div>
        <div className="font-[family-name:'Liberation_Sans',sans-serif] text-[10px] leading-3 whitespace-nowrap opacity-50">XITONGZHIJIA.NET</div>
      </div>
    </div>
  );
}

export default function App() {
  return (
    <div className="bg-[#20242a] font-[family-name:'Noto_Sans_CJK_SC',sans-serif] text-black">
      <div className="relative flex min-h-screen flex-col overflow-hidden rounded-t-lg border border-[#15202c] bg-[#bcd2ee] bg-gradient-to-b from-[#9ab7dc] from-0% via-[#bcd4ee] via-[32px] to-[#bcd2ee] px-[7px] pb-[7px] shadow-[inset_-1px_-1px_0_#5fd3f5,inset_1px_1px_0_#dcebfa]">
        <TitleBar />
        <div className="flex flex-1 flex-col bg-[#f0f0f0]">
          <MenuBar />
          <StandardToolbar />
          <LayerToolbar />
          <Workspace />
          <CommandLine />
          <StatusBar />
        </div>
        <Watermark />
      </div>
    </div>
  );
}
